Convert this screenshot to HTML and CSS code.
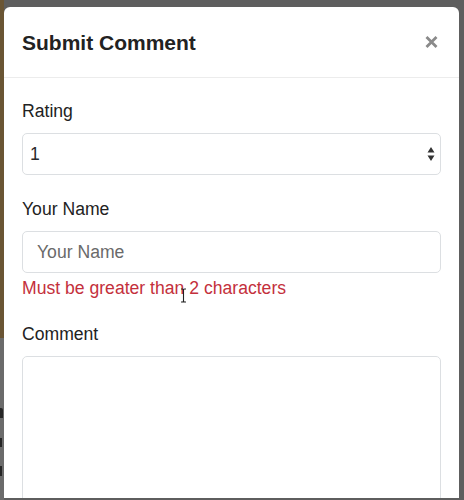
FILE: index.html
```html
<!DOCTYPE html>
<html lang="en">
<head>
<meta charset="utf-8">
<title>Submit Comment</title>
<link rel="stylesheet" href="styles.css">
</head>
<body>
<div class="page">
  <div class="backdrop-edge">
    <div class="edge-top"></div>
    <div class="edge-marks">
      <i class="mark mark-n"></i>
      <i class="mark mark-x"></i>
      <i class="mark mark-t"></i>
    </div>
  </div>
  <div class="modal">
    <div class="modal-header">
      <h5 class="modal-title">Submit Comment</h5>
      <button class="close" type="button" aria-label="Close">
        <svg width="13" height="12" viewBox="0 0 13 12"><path d="M1.5 1 L11.5 11 M11.5 1 L1.5 11" stroke="#8a8a8a" stroke-width="2.8" fill="none"/></svg>
      </button>
    </div>
    <div class="modal-body">
      <div class="form-group">
        <label class="form-label" for="rating">Rating</label>
        <div class="select-wrap">
          <select id="rating" class="form-control form-select">
            <option>1</option><option>2</option><option>3</option><option>4</option><option>5</option>
          </select>
          <svg class="select-arrows" width="8" height="16" viewBox="0 0 8 16"><path d="M0.5 6.5 L4 1 L7.5 6.5 Z M0.5 9.5 L7.5 9.5 L4 15 Z" fill="#333"/></svg>
        </div>
      </div>
      <div class="form-group">
        <label class="form-label" for="author">Your Name</label>
        <input id="author" class="form-control form-input" type="text" placeholder="Your Name">
        <div class="invalid-feedback">Must be greater than 2 characters<svg class="cursor" width="7" height="15" viewBox="0 0 7 15"><path d="M1 1 H2.5 Q3.5 1 3.5 2.5 V12.5 Q3.5 14 2.5 14 H1 M6 1 H4.5 Q3.5 1 3.5 2.5 M3.5 12.5 Q3.5 14 4.5 14 H6" stroke="#222" stroke-width="1.1" fill="none"/></svg></div>
      </div>
      <div class="form-group">
        <label class="form-label" for="comment">Comment</label>
        <textarea id="comment" class="form-control form-textarea" rows="6"></textarea>
      </div>
    </div>
  </div>
</div>
</body>
</html>
```

FILE: styles.css
```css
* { box-sizing: border-box; }

html, body {
  margin: 0;
  padding: 0;
}

body {
  background: #5e5e5e;
  font-family: "Liberation Sans", Arial, Helvetica, sans-serif;
  color: #222;
}

.page {
  display: flex;
  align-items: flex-start;
  height: 500px;
  overflow: hidden;
}

.backdrop-edge {
  width: 4px;
  flex: 0 0 4px;
  height: 500px;
  overflow: hidden;
  background: #6b6b6b;
}

.edge-top {
  height: 338px;
  background: #6a5534;
}

.edge-marks {
  display: flex;
  flex-direction: column;
  align-items: flex-start;
  gap: 18px;
  padding-top: 70px;
}

.mark {
  display: block;
  width: 3px;
  background: #262626;
}

.mark-n {
  height: 10px;
  border-radius: 0 2px 0 0;
}

.mark-x {
  height: 9px;
  width: 2px;
  margin-top: 2px;
}

.mark-t {
  height: 10px;
  width: 2px;
  margin-top: 1px;
}

.modal {
  margin-top: 7px;
  width: 455px;
  flex: 0 0 455px;
  height: 491px;
  background: #fff;
  border-radius: 6px 6px 0 0;
  overflow: hidden;
}

.modal-header {
  display: flex;
  align-items: center;
  justify-content: space-between;
  padding: 20px 21px 18px 18px;
  border-bottom: 1px solid #ececec;
}

.modal-title {
  margin: 0;
  font-size: 21px;
  line-height: 32px;
  font-weight: 700;
  color: #222;
}

.close {
  display: flex;
  padding: 0;
  margin: 0 0 3px 0;
  border: 0;
  background: transparent;
  cursor: pointer;
}

.modal-body {
  padding: 20px 18px 0 18px;
}

.form-group {
  display: flex;
  flex-direction: column;
  margin-bottom: 21px;
}

.form-group:nth-child(2) {
  margin-bottom: 20px;
}

.form-label {
  display: block;
  font-size: 17.6px;
  line-height: 26px;
  margin-bottom: 9px;
  color: #222;
}

.form-control {
  display: block;
  width: 100%;
  font-family: inherit;
  font-size: 17.6px;
  color: #333;
  background: #fff;
  border: 1px solid #dcdfe2;
  border-radius: 5px;
  outline: none;
}

.select-wrap {
  position: relative;
}

.form-select {
  appearance: none;
  -webkit-appearance: none;
  height: 42px;
  padding: 0 30px 0 7px;
  color: #2a2a2a;
}

.select-arrows {
  position: absolute;
  right: 6px;
  top: 13px;
}

.form-input {
  height: 42px;
  padding: 0 14px;
}

.form-input::placeholder {
  color: #6a6a6a;
  opacity: 1;
}

.invalid-feedback {
  position: relative;
  margin-top: 2px;
  font-size: 17.6px;
  line-height: 26px;
  color: #c4303c;
}

.cursor {
  position: absolute;
  left: 158px;
  top: 13px;
}

.form-textarea {
  height: 220px;
  resize: none;
  padding: 8px 14px;
}
```
